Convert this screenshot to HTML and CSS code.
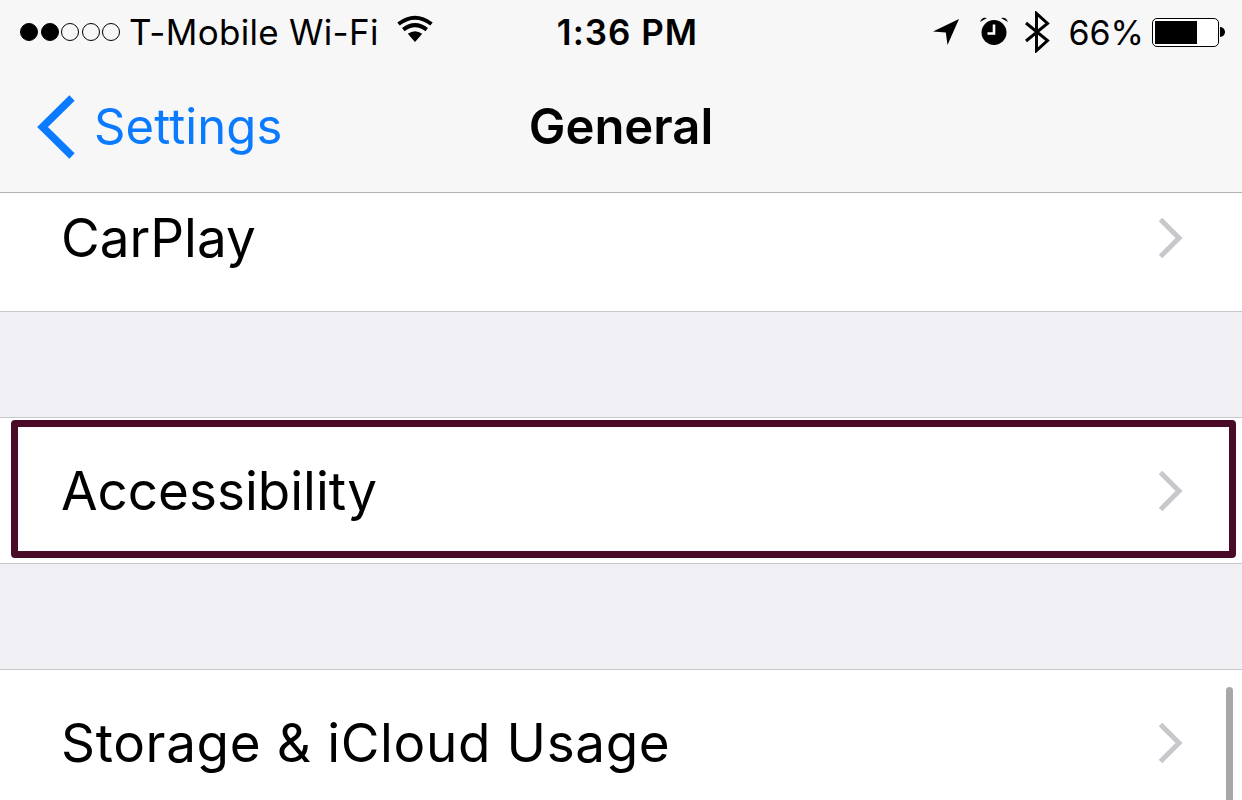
FILE: index.html
```html
<!DOCTYPE html>
<html lang="en">
<head>
<meta charset="utf-8">
<title>General</title>
<link rel="stylesheet" href="styles.css">
</head>
<body>
<div class="screen">
  <header class="header">
    <div class="status">
      <div class="status-left">
        <div class="signal"><i class="dot on"></i><i class="dot on"></i><i class="dot"></i><i class="dot"></i><i class="dot"></i></div>
        <span class="carrier">T-Mobile Wi-Fi</span>
        <svg class="wifi" width="36" height="28" viewBox="0 0 36 28"><path d="M18 27 L10.800 18.800 Q18 13.600 25.200 18.800 Z" fill="#000"/><path d="M6.300 14.600 Q18 5.600 29.700 14.600" fill="none" stroke="#000" stroke-width="4"/><path d="M1.500 9 Q18 -3.400 34.500 9" fill="none" stroke="#000" stroke-width="4"/></svg>
      </div>
      <div class="time">1:36 PM</div>
      <div class="status-right">
        <svg class="loc" width="28" height="28" viewBox="0 0 28 28"><path d="M1 13.500 L27 1 L15.500 27 L13.800 14.500 Z" fill="#000"/></svg>
        <svg class="alarm" width="30" height="30" viewBox="0 0 30 30"><circle cx="15" cy="16.500" r="12.500" fill="#000"/><path d="M1 6 Q3 0.500 8 2 Z M29 6 Q27 0.500 22 2 Z" fill="#000"/><path d="M15 8.500 V17.500 H8.500" fill="none" stroke="#fff" stroke-width="2.600"/></svg>
        <svg class="bt" width="26" height="42" viewBox="0 0 26 42"><path d="M2 12 L23.500 29.500 L12.500 39.500 V2.500 L23.500 12.500 L2 30" fill="none" stroke="#000" stroke-width="3"/></svg>
        <span class="pct">66%</span>
        <div class="battery"><div class="battery-body"><div class="battery-fill"></div></div><div class="battery-tip"></div></div>
      </div>
    </div>
    <nav class="nav">
      <div class="back">
        <svg width="40" height="66" viewBox="0 0 40 66"><path d="M36 4 L6.500 33 L36 62" fill="none" stroke="#0a7aff" stroke-width="7.500"/></svg>
        <span class="back-label">Settings</span>
      </div>
      <div class="title">General</div>
      <div></div>
    </nav>
  </header>
  <section class="row row-carplay"><span class="label">CarPlay</span><svg class="chev" width="26" height="42" viewBox="0 0 26 42"><path d="M2.500 2.500 L21 21 L2.500 39.500" fill="none" stroke="#c7c7cc" stroke-width="5"/></svg></section>
  <div class="gap"></div>
  <section class="row row-access"><span class="label">Accessibility</span><svg class="chev" width="26" height="42" viewBox="0 0 26 42"><path d="M2.500 2.500 L21 21 L2.500 39.500" fill="none" stroke="#c7c7cc" stroke-width="5"/></svg><div class="highlight"></div></section>
  <div class="gap"></div>
  <section class="row row-storage"><span class="label label-wide">Storage &amp; iCloud Usage</span><svg class="chev" width="26" height="42" viewBox="0 0 26 42"><path d="M2.500 2.500 L21 21 L2.500 39.500" fill="none" stroke="#c7c7cc" stroke-width="5"/></svg></section>
  <div class="scrollbar"></div>
</div>
</body>
</html>
```
FILE: styles.css
```css
* { box-sizing: border-box; }
html, body { margin: 0; padding: 0; }
body { font-family: Inter, "Liberation Sans", sans-serif; color: #000; background: #fff; }
.screen { position: relative; width: 1242px; height: 800px; overflow: hidden; background: #efeff4; }

.header { height: 193px; background: #f7f7f8; border-bottom: 1px solid #b2b2b2; display: flex; flex-direction: column; }
.status { height: 64px; padding: 0 17px 0 20px; display: grid; grid-template-columns: 1fr auto 1fr; align-items: center; }
.status-left { display: flex; align-items: center; }
.signal { display: flex; gap: 2.500px; margin-right: 9px; }
.dot { width: 18px; height: 18px; border-radius: 50%; border: 1.500px solid #000; }
.dot.on { background: #000; }
.carrier { font-size: 35px; letter-spacing: 0.300px; }
.wifi { margin-left: 18px; margin-top: -6px; }
.time { font-size: 35px; font-weight: 600; letter-spacing: 1px; margin-left: 10px; }
.status-right { display: flex; align-items: center; justify-content: flex-end; }
.loc { margin-right: 19px; }
.alarm { margin-right: 15px; margin-top: -2px; }
.bt { margin-right: 18px; }
.pct { font-size: 34px; margin-right: 8px; }
.battery { display: flex; align-items: center; }
.battery-body { width: 67px; height: 29px; border: 1.500px solid #000; border-radius: 5px; padding: 2px; background: #fff; }
.battery-fill { width: 42px; height: 100%; background: #000; }
.battery-tip { width: 5px; height: 10px; margin-left: 1px; background: #000; border-radius: 0 5px 5px 0; }

.nav { flex: 1; padding: 0 36px 3px; display: grid; grid-template-columns: 1fr auto 1fr; align-items: center; }
.back { display: flex; align-items: center; }
.back-label { margin-left: 18px; font-size: 49px; letter-spacing: 0.100px; color: #0a7aff; }
.title { font-size: 49px; font-weight: 600; }

.row { position: relative; display: flex; align-items: center; justify-content: space-between; padding: 0 58px 0 61px; background: #fff; border-bottom: 1px solid #c8c7cc; }
.row-carplay { height: 119px; padding-bottom: 28px; }
.row-access { height: 147px; border-top: 1px solid #c8c7cc; }
.row-storage { height: 131px; border-top: 1px solid #c8c7cc; border-bottom: 0; padding-top: 16px; }
.label { font-size: 53px; }
.label-wide { letter-spacing: 0.650px; }
.gap { height: 105px; }

.highlight { position: absolute; left: 11px; top: 2px; width: 1225px; height: 138px; border: 7px solid #4a0b28; border-radius: 4px; }
.scrollbar { position: absolute; left: 1226px; top: 687px; width: 7px; height: 113px; background: #a8a8a8; border-radius: 4px 4px 0 0; }
```
